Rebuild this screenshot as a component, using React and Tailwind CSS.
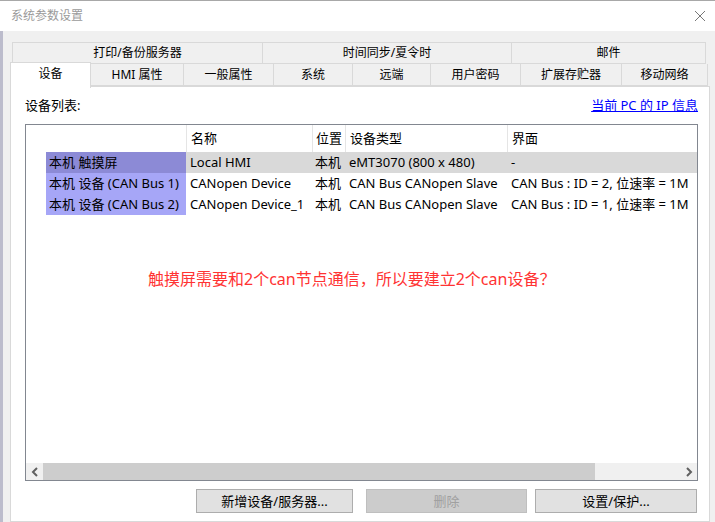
import React from 'react';

const topTabs = [
  { label: '打印/备份服务器', w: 251 },
  { label: '时间同步/夏令时', w: 250 },
  { label: '邮件', w: 195 },
];

const bottomTabs = [
  { label: 'HMI 属性', w: 93 },
  { label: '一般属性', w: 90 },
  { label: '系统', w: 79 },
  { label: '远端', w: 78 },
  { label: '用户密码', w: 90 },
  { label: '扩展存贮器', w: 101 },
  { label: '移动网络', w: 86 },
];

const rows = [
  {
    head: '本机 触摸屏',
    headBg: 'bg-[#8c8ad6]',
    restBg: 'bg-[#d9d9d9]',
    cells: ['Local HMI', '本机', 'eMT3070 (800 x 480)', '-'],
  },
  {
    head: '本机 设备 (CAN Bus 1)',
    headBg: 'bg-[#a6a6f7]',
    restBg: 'bg-white',
    cells: ['CANopen Device', '本机', 'CAN Bus CANopen Slave', 'CAN Bus : ID = 2, 位速率 = 1M'],
  },
  {
    head: '本机 设备 (CAN Bus 2)',
    headBg: 'bg-[#a6a6f7]',
    restBg: 'bg-white',
    cells: ['CANopen Device_1', '本机', 'CAN Bus CANopen Slave', 'CAN Bus : ID = 1, 位速率 = 1M'],
  },
];

const colW = ['w-[126px] pl-[4px]', 'w-[33px] pl-[3px]', 'w-[162px] pl-[4px]', 'w-[300px] pl-[4px]'];

const Chevron = ({ dir }) => (
  <svg width="8" height="10" viewBox="0 0 8 10">
    <polyline
      points={dir === 'left' ? '6,1 2,5 6,9' : '2,1 6,5 2,9'}
      fill="none"
      stroke="#606060"
      strokeWidth="2"
    />
  </svg>
);

const App = () => {
  return (
    <div className="w-[715px] h-[522px] overflow-hidden bg-[#f0f0f0] border-t border-[#a8a8a8] flex flex-col font-['Noto_Sans','Noto_Sans_CJK_SC',sans-serif] text-black">
      {/* title bar */}
      <div className="h-[30px] bg-white flex items-center justify-between pl-[11px] pr-[9px] shrink-0">
        <span className="text-[12px] leading-none text-[#9a9a9a]">系统参数设置</span>
        <svg width="12" height="12" viewBox="0 0 12 12">
          <path d="M1 1 L11 11 M11 1 L1 11" stroke="#777" strokeWidth="1" />
        </svg>
      </div>

      <div className="flex flex-1 min-h-0">
        <div className="w-[3px] bg-[#bcbccc] shrink-0"></div>
        <div className="flex-1 flex flex-col pl-[7px] pt-[11px]">
          {/* tab rows */}
          <div className="flex ml-[2px] h-[22px]">
            {topTabs.map((t) => (
              <div
                key={t.label}
                style={{ width: t.w }}
                className="border border-[#d9d9d9] -ml-px first:ml-0 flex items-center justify-center text-[12px] leading-none"
              >
                {t.label}
              </div>
            ))}
          </div>
          <div className="flex h-[22px] relative z-10">
            <div className="w-[81px] h-[26px] -mt-[2px] bg-white border border-b-0 border-[#d9d9d9] flex items-start justify-center pt-[5px] text-[12px] leading-none">
              设备
            </div>
            {bottomTabs.map((t) => (
              <div
                key={t.label}
                style={{ width: t.w }}
                className="border border-t-0 border-l-0 border-[#d9d9d9] flex items-center justify-center text-[12px] leading-none"
              >
                {t.label}
              </div>
            ))}
          </div>

          {/* panel */}
          <div className="w-[700px] flex-1 bg-white border border-[#d9d9d9] flex flex-col pl-[14px] pr-[11px]">
            <div className="h-[37px] flex items-center justify-between text-[13px] leading-none pt-[7px] pb-[7px]">
              <span>设备列表:</span>
              <span className="text-[#0000ff] underline">当前 PC 的 IP 信息</span>
            </div>

            <div className="h-[357px] border border-[#828790] flex flex-col text-[13px] leading-none overflow-hidden">
              {/* header */}
              <div className="flex h-[27px] shrink-0 whitespace-nowrap">
                <div className="w-[160px] shrink-0"></div>
                {['名称', '位置', '设备类型', '界面'].map((h, i) => (
                  <div key={h} className={`${colW[i]} border-l border-[#e5e5e5] flex items-center shrink-0`}>
                    {h}
                  </div>
                ))}
              </div>

              {rows.map((r) => (
                <div key={r.head} className="flex h-[21px] shrink-0 whitespace-nowrap">
                  <div className="w-[20px] shrink-0"></div>
                  <div className={`w-[140px] shrink-0 pl-[3px] flex items-center ${r.headBg}`}>{r.head}</div>
                  <div className={`flex-1 flex ${r.restBg}`}>
                    {r.cells.map((c, i) => (
                      <div key={i} className={`${colW[i]} shrink-0 flex items-center overflow-hidden`}>
                        {c}
                      </div>
                    ))}
                  </div>
                </div>
              ))}

              <div className="pl-[122px] mt-[54px] text-[16px] leading-[20px] text-[#ff3333] whitespace-nowrap">
                触摸屏需要和2个can节点通信，所以要建立2个can设备？
              </div>

              <div className="flex-1"></div>

              {/* horizontal scrollbar */}
              <div className="h-[17px] flex shrink-0 bg-[#f0f0f0]">
                <div className="w-[17px] flex items-center justify-center">
                  <Chevron dir="left" />
                </div>
                <div className="w-[552px] bg-[#cdcdcd]"></div>
                <div className="flex-1"></div>
                <div className="w-[17px] flex items-center justify-center">
                  <Chevron dir="right" />
                </div>
              </div>
            </div>

            {/* buttons */}
            <div className="flex mt-[8px] text-[13px] leading-none">
              <button className="ml-[171px] w-[157px] h-[24px] bg-[#e1e1e1] border border-[#adadad] flex items-center justify-center">
                新增设备/服务器...
              </button>
              <button className="ml-[13px] w-[161px] h-[24px] bg-[#cccccc] border border-[#bfbfbf] text-[#a0a0a0] flex items-center justify-center">
                删除
              </button>
              <button className="ml-[8px] w-[162px] h-[24px] bg-[#e1e1e1] border border-[#adadad] flex items-center justify-center">
                设置/保护...
              </button>
            </div>
          </div>
        </div>
      </div>
    </div>
  );
};

export default App;
